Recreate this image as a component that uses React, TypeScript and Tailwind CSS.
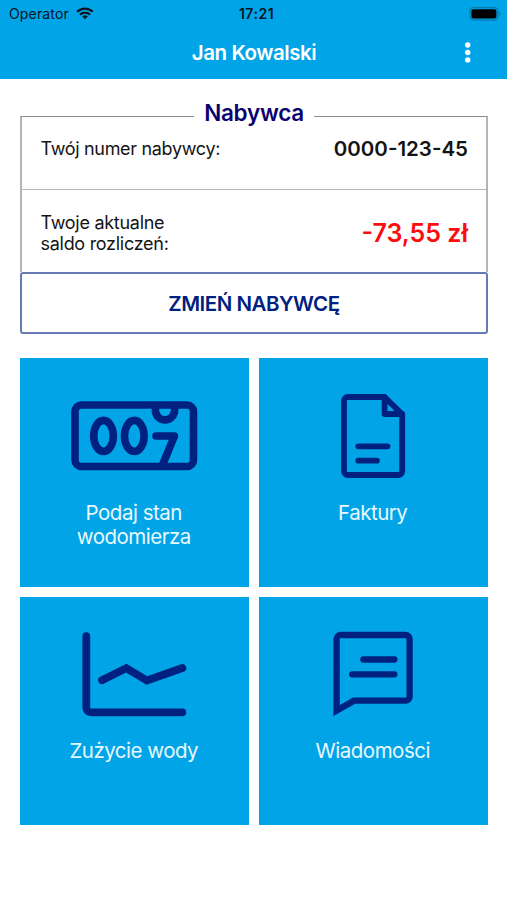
import type { ReactNode } from "react";

const MeterIcon = () => (
  <svg width="130" height="96" viewBox="0 0 130 96" fill="none" stroke="#00217f" strokeWidth="7.6">
    <rect x="6" y="15" width="118.5" height="61.5" rx="6.5" />
    <ellipse cx="34.5" cy="45.9" rx="9.8" ry="15.5" />
    <ellipse cx="65.3" cy="45.9" rx="9.8" ry="15.5" />
    <path d="M86.4 16.5v3.8a9.6 9.6 0 0 0 19.2 0v-3.8" />
    <path d="M87 46h18.4L93.5 75" strokeLinecap="round" strokeLinejoin="round" />
  </svg>
);

const InvoiceIcon = () => (
  <svg
    width="130"
    height="96"
    viewBox="0 0 130 96"
    fill="none"
    stroke="#00217f"
    strokeWidth="5.8"
    strokeLinecap="round"
    strokeLinejoin="round"
  >
    <path d="M76.6 7H40a4 4 0 0 0-4 4v70a4 4 0 0 0 4 4h50.2a4 4 0 0 0 4-4V24.4L76.6 7v17h17.6" />
    <path d="M50.3 56.3h29.2M50.3 70.7h18.6" />
  </svg>
);

const UsageIcon = () => (
  <svg
    width="130"
    height="96"
    viewBox="0 0 130 96"
    fill="none"
    stroke="#00217f"
    strokeWidth="7.8"
    strokeLinecap="round"
  >
    <path d="M17.3 7.2v71.6a4.5 4.5 0 0 0 4.5 4.5h91.5" />
    <path d="M33 51.3l24.3-12.2L78 51.5 113.4 39" />
  </svg>
);

const MessageIcon = () => (
  <svg width="130" height="96" viewBox="0 0 130 96" fill="none" stroke="#00217f" strokeWidth="6.3">
    <path d="M28.6 81.6V10a4 4 0 0 1 4-4h65a4 4 0 0 1 4 4v57.7a4 4 0 0 1-4 4H46L28.6 81.6V70" />
    <path d="M55.4 30.5h31M44.1 45.3h42.3" strokeLinecap="round" />
  </svg>
);

const tiles: { icon: ReactNode; label: ReactNode }[] = [
  {
    icon: <MeterIcon />,
    label: (
      <>
        Podaj stan
        <br />
        wodomierza
      </>
    ),
  },
  { icon: <InvoiceIcon />, label: "Faktury" },
  { icon: <UsageIcon />, label: "Zużycie wody" },
  { icon: <MessageIcon />, label: "Wiadomości" },
];

const StatusBar = () => (
  <div className="grid h-7 grid-cols-3 items-center pr-[6px] pl-[9px] text-[14px] text-[#06151f]">
    <div className="flex h-[26px] items-center gap-[7px] self-start">
      <span className="tracking-[0.15px]">Operator</span>
      <svg width="18" height="13" viewBox="0 0 18 13" fill="none" stroke="#06151f" strokeWidth="2.3">
        <path d="M1.2 4.8a11 11 0 0 1 15.6 0M4 7.7a7 7 0 0 1 10 0" />
        <path d="M9 12.3L6.2 9.5a4 4 0 0 1 5.6 0z" fill="#06151f" stroke="none" />
      </svg>
    </div>
    <div className="pb-[2px] pl-[3px] text-center font-semibold tracking-[0.5px]">17:21</div>
    <svg className="justify-self-end" width="32" height="14" viewBox="0 0 32 14">
      <rect x="0.9" y="0.7" width="28" height="12.4" rx="3.5" fill="none" stroke="#0579aa" strokeWidth="1.2" />
      <rect x="2.4" y="2.3" width="25" height="9.2" rx="2" fill="#000" />
      <path d="M30.2 4.6a2.5 2.5 0 0 1 0 4.4z" fill="#0579aa" />
    </svg>
  </div>
);

export default function App() {
  return (
    <div className="min-h-[900px] w-full bg-white font-['Inter',sans-serif]">
      <header className="h-[79px] bg-[#02a4e8]">
        <StatusBar />
        <div className="grid h-[49px] grid-cols-[60px_1fr_60px] items-center">
          <h1 className="col-start-2 pt-px pl-px text-center text-[20.5px] font-semibold tracking-[-0.45px] text-white">
            Jan Kowalski
          </h1>
          <svg className="ml-3.5" width="14" height="24" viewBox="0 0 14 24" fill="#fff">
            <circle cx="6.7" cy="4" r="2.7" />
            <circle cx="6.7" cy="11.5" r="2.7" />
            <circle cx="6.7" cy="18.9" r="2.7" />
          </svg>
        </div>
      </header>

      <main className="pt-5 pr-[19px] pl-5">
        <fieldset className="h-[173px] border-x-2 border-t border-x-[#b4b4b4] border-t-[#8c8c8c]">
          <legend className="mx-auto h-[34px] px-[10.5px] text-[22.5px] leading-[27px] font-semibold tracking-[-0.3px] text-[#0b0070]">
            Nabywca
          </legend>
          <div className="-mt-[17px] flex h-[74px] justify-between border-b border-[#b5b5b5] pt-[18px] pr-[18px] pl-[18.5px] text-[#141414]">
            <span className="text-[18px] leading-[29px] tracking-[-0.32px]">Twój numer nabywcy:</span>
            <span className="text-[20.5px] leading-[29px] font-semibold">0000-123-45</span>
          </div>
          <div className="flex h-[82px] items-center justify-between pt-1 pr-[18px] pl-[18.5px]">
            <span className="text-[18px] leading-[21.5px] tracking-[-0.28px] text-[#141414]">
              Twoje aktualne
              <br />
              saldo rozliczeń:
            </span>
            <span className="pt-px text-[25px] font-semibold text-[#fb0d0d]">-73,55 zł</span>
          </div>
        </fieldset>
        <button className="block h-[62px] w-full rounded-[3px] border-2 border-[#667ab5] pt-[2px] text-[20.5px] font-semibold tracking-[-0.5px] text-[#00217f]">
          ZMIEŃ NABYWCĘ
        </button>

        <div className="mt-6 grid grid-cols-2 gap-[10px]">
          {tiles.map((tile, id) => (
            <button key={id} className="flex h-[228.5px] flex-col items-center bg-[#02a4e8] pt-8 pr-[1.5px]">
              {tile.icon}
              <span className="mt-[14.5px] text-center text-[20.5px] leading-[24.5px] tracking-[-0.5px] text-[#e8f8ff]">
                {tile.label}
              </span>
            </button>
          ))}
        </div>
      </main>
    </div>
  );
}
